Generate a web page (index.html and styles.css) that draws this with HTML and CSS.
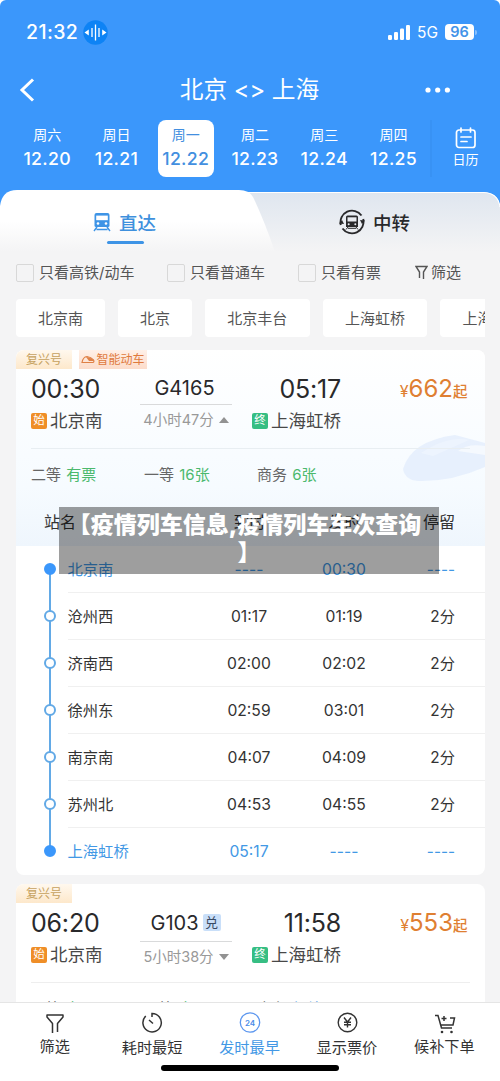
FILE: index.html
```html
<!DOCTYPE html>
<html lang="zh-CN">
<head>
<meta charset="utf-8">
<title>北京 - 上海</title>
<link rel="stylesheet" href="styles.css">
</head>
<body>
<div class="app">
  <header class="header">
    <div class="status">
      <span class="clock">21:32</span>
      <svg class="voice" width="25" height="25" viewBox="0 0 25 25"><circle cx="12.500" cy="12.500" r="12.200" fill="#0d83f5"/><path d="M12.500 4.500v16M9 8v9M16 8v9" stroke="#fff" stroke-width="1.300"/><path d="M5.800 9.500v6L1.500 12.500zM19.200 9.500v6l4.300-3z" fill="#fff"/></svg>
      <svg class="signal" width="23" height="15" viewBox="0 0 23 15" fill="#fff"><rect x="0" y="10" width="4" height="5" rx="1.200"/><rect x="6" y="7" width="4" height="8" rx="1.200"/><rect x="12" y="3.500" width="4" height="11.500" rx="1.200"/><rect x="18" y="0" width="4" height="15" rx="1.200"/></svg>
      <span class="network">5G</span>
      <span class="battery">96</span><span class="battery-cap"></span>
    </div>
    <div class="titlebar">
      <svg width="18" height="24" viewBox="0 0 18 24" fill="none" stroke="#fff" stroke-width="3"><path d="M16 1.500L5 12l11 10.500"/></svg>
      <h1 class="title">北京 &lt;&gt; 上海</h1>
      <svg width="26" height="6" viewBox="0 0 26 6" fill="#fff"><circle cx="3" cy="3" r="2.600"/><circle cx="12.700" cy="3" r="2.600"/><circle cx="22.400" cy="3" r="2.600"/></svg>
    </div>
    <nav class="dates">
      <div class="date"><span>周六</span><b>12.20</b></div>
      <div class="date"><span>周日</span><b>12.21</b></div>
      <div class="date selected"><span>周一</span><b>12.22</b></div>
      <div class="date"><span>周二</span><b>12.23</b></div>
      <div class="date"><span>周三</span><b>12.24</b></div>
      <div class="date"><span>周四</span><b>12.25</b></div>
      <div class="calendar">
        <svg width="22" height="22" viewBox="0 0 22 22" fill="none" stroke="#fff" stroke-width="1.700" stroke-linecap="round"><rect x="1.500" y="3" width="18.500" height="17.500" rx="2.500"/><path d="M6 1v4M15.500 1v4M6 10h10M6 14.500h6"/></svg>
        <span>日历</span>
      </div>
    </nav>
  </header>

  <div class="tabs">
    <svg class="tabs-bg" width="500" height="62" viewBox="0 0 500 62">
      <defs>
        <linearGradient id="g1" x2="0" y2="1"><stop offset="0" stop-color="#dfe6ef"/><stop offset="1" stop-color="#f4f4f5"/></linearGradient>
        <linearGradient id="g2" x2="0" y2="1"><stop offset=".5" stop-color="#fff"/><stop offset="1" stop-color="#f4f4f5"/></linearGradient>
      </defs>
      <path d="M220 2.500H485Q500 3 500 20V62H220z" fill="url(#g1)"/>
      <path d="M240 2.500H484Q498 3 500 17" fill="none" stroke="#fff" stroke-width="1.200"/>
      <path d="M0 62V16Q2 0 17 0H239Q249 0 253 7Q264 30 275 62z" fill="url(#g2)"/>
    </svg>
    <div class="tab active">
      <svg width="18" height="20" viewBox="0 0 18 20"><path d="M3.500 1h11q2 0 2 2v10.500q0 1.500-1.500 1.500H3q-1.500 0-1.500-1.500V3q0-2 2-2z" fill="#3e94e6"/><path d="M3.200 3.600h11.600v4.600H3.200z" fill="#fff"/><circle cx="5" cy="11.500" r="1.300" fill="#fff"/><circle cx="13" cy="11.500" r="1.300" fill="#fff"/><path d="M4 15l-3 4M14 15l3 4M3.500 17.500h11" stroke="#3e94e6" stroke-width="1.400"/></svg>
      <span>直达</span>
    </div>
    <div class="tab transfer">
      <svg width="26" height="26" viewBox="0 0 26 26"><path d="M1.800 16A11.600 11.600 0 0 1 22.500 6.500M24.200 10A11.600 11.600 0 0 1 3.500 19.500" fill="none" stroke="#29292b" stroke-width="1.900"/><path d="M0 14.500l3-3.500 2 4zM26 11.500l-3 3.500-2-4z" fill="#29292b"/><path d="M8.500 6.500h9q1.500 0 1.500 1.500v10H7V8q0-1.500 1.500-1.500z" fill="#29292b"/><path d="M8.500 8.300h9v4.200h-9z" fill="#e8ebf0"/><circle cx="9.700" cy="15.300" r="1" fill="#e8ebf0"/><circle cx="16.300" cy="15.300" r="1" fill="#e8ebf0"/><path d="M9 18l-2 2.500M17 18l2 2.500M9 19.300h8" stroke="#29292b"/></svg>
      <span>中转</span>
    </div>
  </div>

  <div class="filters">
    <label class="check f1"><i></i>只看高铁/动车</label>
    <label class="check f2"><i></i>只看普通车</label>
    <label class="check f3"><i></i>只看有票</label>
    <span class="funnel"><svg width="13" height="15" viewBox="0 0 13 15" fill="none" stroke="#555" stroke-width="1.400"><path d="M4.500 13V7L1 1.500h11L8.500 7v7"/></svg>筛选</span>
  </div>
  <div class="chips"><span>北京南</span><span>北京</span><span>北京丰台</span><span>上海虹桥</span><span>上海</span></div>

  <main class="list">
    <section class="card open">
      <div class="summary">
        <svg class="train-art" width="82" height="56" viewBox="0 0 82 56"><path d="M0 38Q8 10 52 4L82 12V36Q48 51 15 50Q2 49 0 38z" fill="#e2ecfc" opacity=".75"/><path d="M55 20Q65 12 82 15V24z" fill="#f5f9fe"/><path d="M18 22Q45 4 66 9L30 25z" fill="#edf4fe"/></svg>
        <div class="badges"><span class="fuxing">复兴号</span><span class="smart"><svg width="14" height="9" viewBox="0 0 14 9"><path d="M1 7.500Q2 2 6 1.500Q10 2 12.500 5q1 2-.5 2.500z" fill="none" stroke="#df8046" stroke-width="1.200"/><path d="M5 2l3 4h5Q10 2 5 2z" fill="#df8046"/></svg>智能动车</span></div>
        <div class="trip">
          <div class="depart"><time>00:30</time><p><i class="tag start">始</i>北京南</p></div>
          <div class="train"><strong>G4165</strong><hr><p>4小时47分<i class="tri up"></i></p></div>
          <div class="arrive"><time>05:17</time><p><i class="tag end">终</i>上海虹桥</p></div>
          <div class="price"><small class="yen">¥</small>662<small>起</small></div>
        </div>
        <div class="seats"><span>二等 <em>有票</em></span><span>一等 <em>16张</em></span><span>商务 <em>6张</em></span></div>
        <div class="stop-head"><span>站名</span><span class="c">到时</span><span class="c">发时</span><span class="r">停留</span></div>
      </div>
      <div class="stops">
        <div class="stop terminal first"><i class="dot"></i><div><span>北京南</span><span class="c">----</span><span class="c">00:30</span><span class="r">----</span></div></div>
        <div class="stop"><i class="dot"></i><div><span>沧州西</span><span class="c">01:17</span><span class="c">01:19</span><span class="r">2分</span></div></div>
        <div class="stop"><i class="dot"></i><div><span>济南西</span><span class="c">02:00</span><span class="c">02:02</span><span class="r">2分</span></div></div>
        <div class="stop"><i class="dot"></i><div><span>徐州东</span><span class="c">02:59</span><span class="c">03:01</span><span class="r">2分</span></div></div>
        <div class="stop"><i class="dot"></i><div><span>南京南</span><span class="c">04:07</span><span class="c">04:09</span><span class="r">2分</span></div></div>
        <div class="stop"><i class="dot"></i><div><span>苏州北</span><span class="c">04:53</span><span class="c">04:55</span><span class="r">2分</span></div></div>
        <div class="stop terminal last"><i class="dot"></i><div><span>上海虹桥</span><span class="c">05:17</span><span class="c">----</span><span class="r">----</span></div></div>
      </div>
    </section>
    <section class="card second">
      <div class="badges"><span class="fuxing">复兴号</span></div>
      <div class="trip">
        <div class="depart"><time>06:20</time><p><i class="tag start">始</i>北京南</p></div>
        <div class="train"><strong>G103<i class="redeem">兑</i></strong><hr><p>5小时38分<i class="tri down"></i></p></div>
        <div class="arrive"><time>11:58</time><p><i class="tag end">终</i>上海虹桥</p></div>
        <div class="price"><small class="yen">¥</small>553<small>起</small></div>
      </div>
      <div class="seats"><span>二等 <em>有票</em></span><span>一等 <em>有票</em></span><span>商务 <em class="wait">候补</em></span></div>
    </section>
  </main>

  <footer class="bottom">
    <div class="actions">
      <div class="action"><svg width="22" height="22" viewBox="0 0 22 22" fill="none" stroke="#333" stroke-width="1.500" stroke-linejoin="round"><path d="M8.500 21V11.500L3 5V3h16v2L13.500 11.500V20"/></svg><span>筛选</span></div>
      <div class="action low"><svg width="22" height="22" viewBox="0 0 22 22" fill="none" stroke="#333" stroke-width="1.500"><path d="M11 5V1.500A9.200 9.200 0 1 1 4.800 4M8 8l4 3.500"/></svg><span>耗时最短</span></div>
      <div class="action low on"><svg width="22" height="22" viewBox="0 0 22 22"><circle cx="11" cy="10.500" r="9.700" fill="none" stroke="#5b96ef" stroke-width="1.300"/><text x="11" y="13.500" text-anchor="middle" class="num24">24</text></svg><span>发时最早</span></div>
      <div class="action low"><svg width="22" height="22" viewBox="0 0 22 22" fill="none" stroke="#333" stroke-width="1.400"><circle cx="11.500" cy="10.500" r="9.300"/><path d="M8 5.500l3.500 4.500L15 5.500M11.500 10V15.500M8 10.200h7M8 12.700h7"/></svg><span>显示票价</span></div>
      <div class="action cart"><svg width="22" height="22" viewBox="0 0 22 22" fill="none" stroke="#333" stroke-width="1.500"><path d="M1 3.500h3L7.500 16H18M16 6h4.500L19 13H6.700M10 4v5M7.500 6.500h5"/><circle cx="8" cy="20" r="1.300" fill="#333" stroke="none"/><circle cx="17.500" cy="20" r="1.300" fill="#333" stroke="none"/></svg><span>候补下单</span></div>
    </div>
    <div class="home"></div>
  </footer>
  <div class="banner"><span class="line">【疫情列车信息,疫情列车车次查询</span><span>】</span></div>
</div>
</body>
</html>
```
FILE: styles.css
```css
* { box-sizing: border-box; }
body { margin: 0; background: #fff; }
body, h1, p { font-family: Inter, "Noto Sans CJK SC", sans-serif; }
h1, p, hr { margin: 0; }
i, em { font-style: normal; }
svg { display: block; flex: none; }
.app { position: relative; width: 500px; height: 1081px; overflow: hidden; display: flex; flex-direction: column; background: #f4f4f5; color: #333; white-space: nowrap; }
.app > * { flex: none; }

.header { height: 190px; background: #3b97fb; color: #fff; border-radius: 6px 6px 0 0; box-shadow: 0 16px 0 #3b97fb; }
.app::before { content: ""; position: absolute; inset: 0 0 auto; height: 10px; background: #fff; }
.header, .tabs { position: relative; }
.status { height: 64px; padding: 0 23px 0 26px; display: flex; align-items: center; }
.clock { font-size: 19.500px; font-weight: 500; letter-spacing: .4px; width: 57px; }
.signal { margin-left: auto; }
.network { font-size: 15.500px; margin: 1px 7px 0 6px; }
.battery { width: 29px; height: 16px; border-radius: 4px; background: #fff; color: #4293e8; font-size: 14.500px; line-height: 16px; font-weight: 600; text-align: center; }
.battery-cap { width: 2px; height: 5px; margin-left: 1px; border-radius: 0 2px 2px 0; background: #86bffc; }
.titlebar { height: 50px; padding: 0 49px 0 17px; display: grid; grid-template-columns: 18px 1fr 26px; align-items: center; }
.title { font-size: 23.700px; font-weight: 400; text-align: center; line-height: 50px; padding-left: 39px; padding-top: 1px; }
.dates { display: flex; padding: 6px 0 0 12.500px; }
.date { width: 69.300px; height: 57px; display: flex; flex-direction: column; align-items: center; padding-top: 5px; border-radius: 8px; }
.date span { font-size: 14px; line-height: 20px; }
.date b { font-size: 17.700px; line-height: 28px; font-weight: 500; letter-spacing: .3px; }
.date.selected { width: 56px; margin: 0 6.600px; background: #fff; color: #428fe0; }
.calendar { flex: 1; margin-left: 2px; display: flex; flex-direction: column; align-items: center; border-left: 2px solid #3892f4; padding: 7px 1px 0 0; font-size: 13px; line-height: 20px; }

.tabs { height: 61px; display: flex; }
.tabs-bg { position: absolute; inset: 0 auto auto 0; }
.tab { position: relative; display: flex; align-items: center; font-size: 18.500px; font-weight: 500; height: 64px; }
.active { width: 250px; justify-content: center; gap: 8px; color: #3e90dd; padding-right: 1px; }
.active::after { content: ""; position: absolute; left: 107px; top: 51px; width: 37px; height: 3px; border-radius: 2px; background: #3e94e6; }
.transfer { width: 250px; padding-left: 89px; gap: 8px; color: #29292b; }

.filters { height: 44px; padding-left: 16px; display: flex; align-items: center; font-size: 15px; line-height: 20px; color: #555; padding-bottom: 1px; }
.check { display: flex; align-items: center; gap: 5px; }
.check i { width: 18px; height: 18px; border: 1.500px solid #d8d8d8; border-radius: 2px; }
.f1 { width: 151px; } .f2 { width: 131px; } .f3 { width: 117px; }
.funnel { display: flex; align-items: center; gap: 3px; }
.chips { display: flex; gap: 13px; margin: 4px 15px 0 16px; height: 38px; overflow: hidden; font-size: 15px; line-height: 39px; color: #555; }
.chips span { flex: none; padding: 0 22px; background: #fff; border-radius: 4px; }
.chips span:nth-child(n+3) { padding: 0 22.300px; }

.list { margin: 13px 15.500px 0 16px; display: flex; flex-direction: column; gap: 9px; height: 652px; overflow: hidden; }
.card { flex: none; background: #fff; border-radius: 8px; overflow: hidden; }
.open { height: 525px; }
.second { height: 200px; }
.summary { position: relative; height: 196px; background: linear-gradient(#fff 0, #f6fbff 70%, #eff6fd); }
.train-art { position: absolute; right: 0; top: 81px; }
.summary > div { position: relative; }
.badges { display: flex; gap: 7px; height: 19px; font-size: 12px; line-height: 19px; }
.fuxing { width: 56px; text-align: center; color: #c6a25f; background: linear-gradient(#fff8ee, #fde8cb); }
.smart { width: 68px; display: flex; align-items: center; justify-content: center; gap: 1px; color: #df7a3d; background: linear-gradient(#fff0e7, #fcdccb); }
.trip { height: 80px; margin: 0 15px; display: grid; grid-template-columns: 109px 92px 109px 1fr; border-bottom: 1px solid #e8eef2; }
.second .trip { border-color: #eee; }
.trip time { display: block; font-size: 25px; line-height: 30px; margin-top: 5px; color: #29292b; letter-spacing: -.2px; }
.depart p, .arrive p { display: flex; align-items: center; font-size: 17.500px; line-height: 26px; margin-top: 4px; color: #484848; gap: 3px; }
.arrive time { text-align: right; }
.arrive p { justify-content: flex-end; }
.tag { width: 16px; height: 16px; border-radius: 2px; color: #fff; font-size: 11.500px; line-height: 15px; text-align: center; }
.start { background: #ef8e27; }
.end { background: #36be83; }
.train { text-align: center; }
.train strong { display: flex; justify-content: center; align-items: center; gap: 4px; height: 28px; margin: 5px 3px 0 0; font-size: 20px; font-weight: 400; color: #29292b; }
.train hr { border: 0; height: 1px; background: #d9dadb; margin-top: 2px; }
.train p { font-size: 14.500px; line-height: 20px; color: #999; margin-top: 5px; display: flex; align-items: center; justify-content: center; gap: 5px; }
.second .train hr { margin-top: 5px; }
.second .train strong { margin-right: 1px; padding-top: 1px; }
.redeem { width: 18px; height: 17px; background: #c9dff9; border-radius: 2px; font-size: 13px; line-height: 16px; color: #374963; }
.tri { border: 5px solid transparent; width: 0; }
.up { border-top: 0; border-bottom: 6px solid #929292; }
.down { border-bottom: 0; border-top: 6px solid #929292; }
.price { text-align: right; font-size: 24px; line-height: 39px; color: #df7f32; padding-right: 2px; }
.price small { font-size: 14.500px; font-weight: 500; }
.price .yen { font-size: 16px; font-weight: 400; }
.seats { display: flex; padding: 15px 15px 0; height: 50px; font-size: 15px; line-height: 22px; color: #666; }
.seats span { width: 113px; word-spacing: 1px; }
.seats em { color: #4bb96d; }
.seats .wait { color: #4293e8; }
.stop-head { display: grid; grid-template-columns: 158px 95px 95px 63px; padding: 0 0 0 28px; font-size: 16px; line-height: 46px; }
.c { text-align: center; }
.r { text-align: right; }
.stop { height: 47px; padding-left: 28px; display: flex; align-items: center; position: relative; font-size: 15.300px; }
.stop > div { flex: 1; margin-left: 11.500px; height: 47px; line-height: 48px; display: grid; grid-template-columns: 134px 95px 95px 63.500px; border-bottom: 1px solid #f0f0f0; }
.stop.last > div { border: 0; }
.stop .c { font-size: 15.700px; }
.stop::before { content: ""; position: absolute; left: 33px; top: 0; bottom: 0; width: 2px; background: #62a9e6; }
.first::before { top: 23px; }
.last::before { bottom: 23px; }
.dot { position: relative; width: 12px; height: 12px; border: 2px solid #62a9e6; border-radius: 50%; background: #fff; margin-bottom: 1px; }
.terminal { color: #4298e5; }
.terminal .dot { background: #3b97fb; border-color: #3b97fb; }

.bottom { height: 79px; background: #fff; border-top: 1px solid #e5e5e5; }
.actions { display: flex; padding: 9px 7px 0 6px; height: 62px; }
.action { flex: 1; display: flex; flex-direction: column; align-items: center; font-size: 15.200px; line-height: 22px; color: #333; }
.action span { margin-top: 2px; }
.low span { margin-top: 3px; }
.cart svg { margin-left: 2px; }
.on { color: #4298e5; }
.num24 { font: 600 8px Inter, sans-serif; fill: #4b8be8; }
.home { width: 178px; height: 6px; border-radius: 3px; background: #000; margin-left: 161px; }

.banner { position: absolute; left: 59px; top: 507px; width: 380px; height: 67px; padding-top: 4px; background: rgba(0,0,0,.38); color: #fff; font-size: 23px; line-height: 28px; font-weight: 900; display: flex; flex-direction: column; align-items: center; }
.banner .line { padding-right: 9px; }
```
